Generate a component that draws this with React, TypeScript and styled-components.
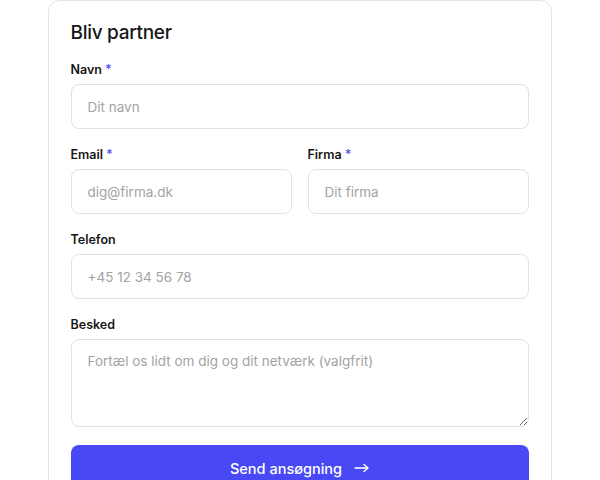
import React from "react";
import styled, { createGlobalStyle } from "styled-components";

const Global = createGlobalStyle`
  html, body { margin: 0; padding: 0; background: #ffffff; }
  body { font-family: Inter, "Noto Sans", "Liberation Sans", sans-serif; color: #171717; }
  * { box-sizing: border-box; }
`;

const Page = styled.div`
  width: 600px;
  height: 480px;
  overflow: hidden;
  display: flex;
  justify-content: center;
`;

const Card = styled.form`
  width: 504px;
  margin-left: -1px;
  border: 1px solid #e4e4e7;
  border-radius: 12px;
  padding: 18px 22px 24px;
  display: flex;
  flex-direction: column;
  gap: 17px;
  align-self: flex-start;
  background: #fff;
`;

const Title = styled.h2`
  margin: 0 0 -3px;
  font-size: 19px;
  line-height: 28px;
  font-weight: 500;
  letter-spacing: -0.3px;
  color: #171717;
`;

const Row = styled.div`
  display: grid;
  grid-template-columns: 1fr 1fr;
  gap: 16px;
`;

const Field = styled.label`
  display: flex;
  flex-direction: column;
  gap: 5px;
`;

const LabelText = styled.span`
  font-size: 12.5px;
  line-height: 18px;
  font-weight: 600;
  color: #171717;
`;

const Req = styled.span`
  color: #5353f2;
  margin-left: 3px;
`;

const inputBase = `
  width: 100%;
  border: 1px solid #e2e2e4;
  border-radius: 8px;
  background: #fff;
  font-family: Inter, "Noto Sans", "Liberation Sans", sans-serif;
  font-size: 13.5px;
  color: #171717;
  padding: 0 16px;
  outline: none;
  &::placeholder { color: #a3a3a3; }
`;

const Input = styled.input`
  ${inputBase}
  height: 45px;
`;

const TextArea = styled.textarea`
  ${inputBase}
  height: 88px;
  padding: 11px 16px;
  line-height: 20px;
  resize: vertical;
  display: block;
`;

const Button = styled.button`
  margin-top: 1px;
  height: 46px;
  border: none;
  border-radius: 8px;
  background: #4849f5;
  color: #fff;
  font-family: Inter, "Noto Sans", "Liberation Sans", sans-serif;
  font-size: 14.5px;
  font-weight: 500;
  display: flex;
  align-items: center;
  justify-content: center;
  gap: 12px;
`;

const ArrowIcon = () => (
  <svg width="15" height="10" viewBox="0 0 15 10" fill="none" stroke="#fff" strokeWidth="1.4" strokeLinecap="round" strokeLinejoin="round">
    <path d="M1 5h13M10 1.5L14 5l-4 3.5" />
  </svg>
);

export default function App() {
  return (
    <>
      <Global />
      <Page>
        <Card onSubmit={(e) => e.preventDefault()}>
          <Title>Bliv partner</Title>
          <Field>
            <LabelText>
              Navn<Req>*</Req>
            </LabelText>
            <Input placeholder="Dit navn" />
          </Field>
          <Row>
            <Field>
              <LabelText>
                Email<Req>*</Req>
              </LabelText>
              <Input placeholder="dig@firma.dk" />
            </Field>
            <Field>
              <LabelText>
                Firma<Req>*</Req>
              </LabelText>
              <Input placeholder="Dit firma" />
            </Field>
          </Row>
          <Field>
            <LabelText>Telefon</LabelText>
            <Input placeholder="+45 12 34 56 78" />
          </Field>
          <Field>
            <LabelText>Besked</LabelText>
            <TextArea placeholder="Fortæl os lidt om dig og dit netværk (valgfrit)" />
          </Field>
          <Button type="submit">
            Send ansøgning <ArrowIcon />
          </Button>
        </Card>
      </Page>
    </>
  );
}
